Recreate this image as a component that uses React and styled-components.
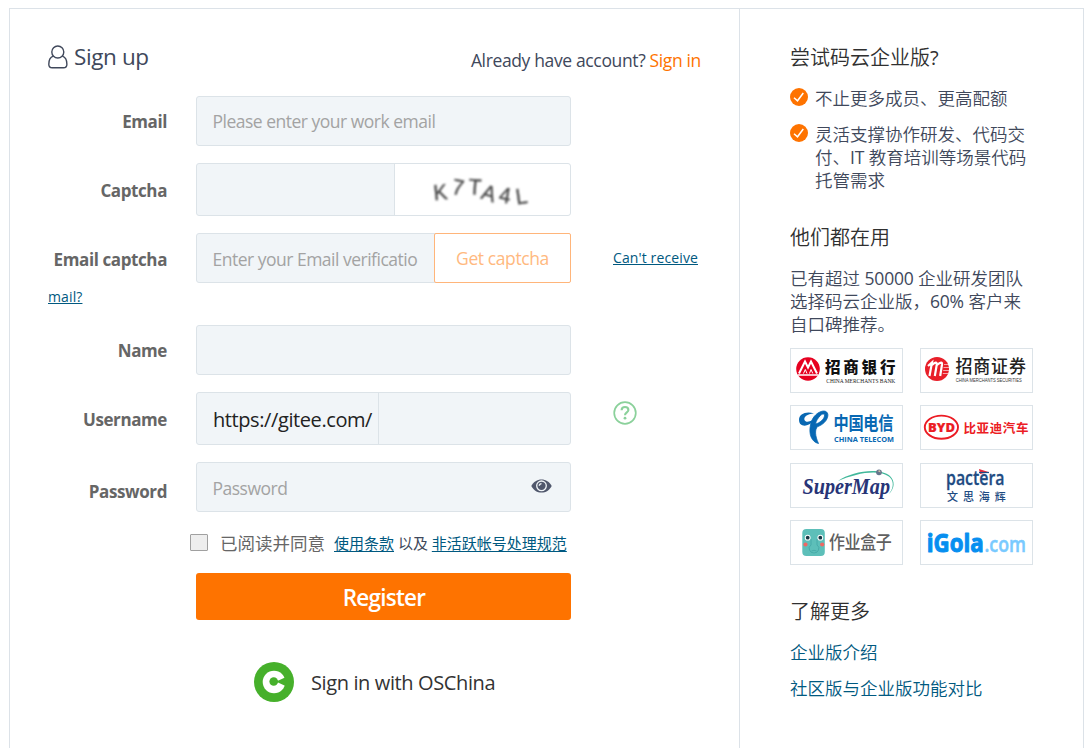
import React from "react";
import styled, { createGlobalStyle } from "styled-components";

const GlobalStyle = createGlobalStyle`
  * { box-sizing: border-box; }
  html, body { margin: 0; background: #fff; }
  body {
    overflow: hidden;
    font-family: "Open Sans", "Noto Sans CJK SC", sans-serif;
    font-size: 17.5px;
    font-weight: 400;
    color: #40485b;
  }
  a { color: #005980; text-decoration: none; }
`;

const Page = styled.main`
  display: grid;
  grid-template-columns: 730px 1fr;
  width: 1075px;
  height: 740px;
  margin: 8px 0 0 9px;
  border: 1px solid #dce2e8;
  border-bottom: 0;
`;

const FormPanel = styled.section`
  padding: 31px 38px 0 38px;
  border-right: 1px solid #dce2e8;
`;

const Header = styled.header`
  display: flex;
  justify-content: space-between;
  height: 56px;
`;

const Title = styled.h1`
  display: flex;
  align-items: center;
  gap: 6px;
  height: 32px;
  margin: 0;
  font-size: 22.5px;
  font-weight: 400;
  letter-spacing: -0.4px;
  svg { margin-top: 2px; }
`;

const SignIn = styled.p`
  margin: 0;
  line-height: 40px;
  letter-spacing: -0.36px;
  white-space: nowrap;
  a { color: #fe7300; }
`;

const Row = styled.div`
  display: grid;
  grid-template-columns: 119px 375px auto;
  grid-template-rows: 100%;
  column-gap: 29px;
  height: ${(p) => p.$height || 50}px;
  margin-bottom: ${(p) => (p.$gap === undefined ? 17 : p.$gap)}px;
`;

const Label = styled.label`
  padding-top: ${(p) => p.$drop || 0}px;
  line-height: 52px;
  text-align: right;
  font-weight: 700;
  font-size: 17px;
  letter-spacing: -0.4px;
  color: #666;
  white-space: nowrap;
`;

const Control = styled.div`
  display: flex;
  align-items: stretch;
  min-width: 0;
  background: #f1f5f8;
  border: 1px solid #dce3e8;
  border-radius: 3px;
`;

const Input = styled.input`
  flex: 1;
  min-width: 0;
  padding: ${(p) => (p.$drop ? 1 : 0)}px 0 0 15.5px;
  border: 0;
  outline: 0;
  background: transparent;
  font: inherit;
  letter-spacing: -0.5px;
  color: #222;
  &::placeholder { color: #a3a3a3; opacity: 1; }
`;

const CaptchaImage = styled.div`
  width: 176px;
  background: #fff;
  border-left: 1px solid #dce3e8;
  border-radius: 0 3px 3px 0;
  svg { display: block; }
`;

const CaptchaButton = styled.button`
  width: 137px;
  margin: -1px -1px -1px 0;
  padding: 0;
  border: 1px solid #ffb57a;
  border-radius: 2px;
  background: #fff;
  color: #ffb980;
  font: inherit;
  letter-spacing: -0.4px;
`;

const Prefix = styled.span`
  width: 182px;
  padding-left: 16px;
  border-right: 1px solid #dce3e8;
  font-size: 20px;
  line-height: 54px;
  letter-spacing: -0.41px;
  color: #222;
  white-space: nowrap;
`;

const Aside = styled.div`
  display: flex;
  padding: ${(p) => p.$top || 0}px 0 0 13px;
  white-space: nowrap;
`;

const SmallLink = styled.a`
  display: inline-block;
  font-size: 14px;
  line-height: 20px;
  letter-spacing: 0.12px;
  text-decoration: underline;
`;

const WrappedHelp = styled.div`
  display: flex;
  height: 42px;
  padding-top: 4px;
`;

const EyeToggle = styled.span`
  display: flex;
  align-items: center;
  padding: 0 18px 2px 0;
`;

const Agreement = styled.div`
  display: flex;
  align-items: center;
  height: 61px;
  margin-left: 142px;
  color: #666;
  white-space: nowrap;
`;

const CheckBox = styled.span`
  width: 18px;
  height: 17px;
  margin: 0 12px 0 0;
  background: #eee;
  border: 1px solid #a0a0a0;
  border-radius: 1px;
`;

const Terms = styled.span`
  margin-left: 9px;
  font-size: 15px;
  color: #40485b;
  a { text-decoration: underline; text-underline-offset: 2px; }
`;

const RegisterButton = styled.button`
  display: block;
  width: 375px;
  height: 47px;
  margin-left: 148px;
  padding: 1px 0 0 1px;
  border: 0;
  border-radius: 3px;
  background: #fe7300;
  color: #fff;
  font: inherit;
  font-size: 22.5px;
  font-weight: 600;
  letter-spacing: -0.75px;
`;

const OtherLogin = styled.a`
  display: flex;
  align-items: center;
  gap: 17px;
  margin: 42px 0 0 206px;
  font-size: 20px;
  && { color: #333; }
  letter-spacing: -0.38px;
`;

const SidePanel = styled.aside`
  padding: 37px 50px 0 50px;
`;

const SideHeading = styled.h2`
  height: 24px;
  margin: ${(p) => p.$top || 0}px 0 17px;
  font-size: 20px;
  font-weight: 360;
  line-height: 24px;
  color: #303030;
`;

const FeatureList = styled.ul`
  margin: 0;
  padding: 0;
  list-style: none;
`;

const Feature = styled.li`
  display: flex;
  gap: 7px;
  width: 250px;
  margin-bottom: 13px;
  line-height: 23px;
  font-weight: 360;
  svg { flex: none; margin-top: 1px; }
  span { white-space: nowrap; }
`;

const Paragraph = styled.p`
  margin: 0 0 12px;
  line-height: 23px;
  font-weight: 360;
  white-space: nowrap;
`;

const LogoGrid = styled.div`
  display: grid;
  grid-template-columns: 113px 113px;
  grid-auto-rows: 45px;
  gap: 12.33px 17px;
`;

const LogoCard = styled.div`
  border: 1px solid #dce3e8;
  svg { display: block; overflow: visible; }
`;

const MoreLink = styled.a`
  display: block;
  margin-bottom: 13px;
  line-height: 23px;
  font-weight: 360;
`;

const Latin = styled.span`
  font-weight: 400;
  letter-spacing: -0.2px;
`;

const CJK = "Noto Sans CJK SC, sans-serif";
const SERIF = "Liberation Serif, serif";

const UserIcon = () => (
  <svg width="20" height="24" viewBox="0 0 20 24" fill="none" stroke="#40485b" strokeWidth="1.4">
    <circle cx="9.8" cy="7" r="6" />
    <path d="M5.200 11.200C2 12.400.8 15.800.8 19.200Q.8 22.700 4.200 22.700H15.500Q18.900 22.700 18.900 19.200C18.900 15.800 17.600 12.400 14.400 11.200" />
  </svg>
);

const EyeIcon = () => (
  <svg width="21" height="14" viewBox="0 0 21 14">
    <path d="M.3 7C2.500 2.700 6.200.4 10.500.4S18.500 2.700 20.700 7C18.500 11.300 14.800 13.600 10.500 13.600S2.500 11.300.3 7Z" fill="#50576c" />
    <circle cx="10.500" cy="6.800" r="4.800" fill="none" stroke="#f1f5f8" strokeWidth="1.300" />
    <path d="M8.300 6.800A2.200 2.200 0 0 1 10.500 4.600" fill="none" stroke="#f1f5f8" strokeWidth="1.400" />
  </svg>
);

const HelpIcon = () => (
  <svg width="24" height="24" viewBox="0 0 24 24" fill="none" stroke="#8bd19b">
    <circle cx="12" cy="12" r="10.800" strokeWidth="1.700" />
    <path d="M8.600 9.200C8.700 7.100 10.100 6 12 6C14 6 15.400 7.200 15.400 9C15.400 11.300 12 11.500 12 14.300" strokeWidth="2.100" />
    <circle cx="12" cy="17.200" r="1.400" fill="#8bd19b" stroke="none" />
  </svg>
);

const CheckIcon = () => (
  <svg width="18" height="18" viewBox="0 0 18 18">
    <circle cx="9" cy="9" r="9" fill="#fe7300" />
    <path d="M4 9.700L7.500 12.800L13.300 5" fill="none" stroke="#fff" strokeWidth="1.500" />
  </svg>
);

const OSChinaIcon = () => (
  <svg width="40" height="40" viewBox="0 0 40 40">
    <circle cx="20" cy="20" r="20" fill="#46b02b" />
    <circle cx="20" cy="20" r="11.300" fill="#fff" />
    <circle cx="19.700" cy="19.500" r="4.300" fill="#46b02b" />
    <path d="M20 18.200L24.500 18.600L31 15.500L33 20L31 23.800L24 20.600L20 21.500Z" fill="#46b02b" />
  </svg>
);

const captchaGlyphs = [
  ["K", 45.5, 28, -6], ["7", 63, 23, 10], ["T", 80, 22.5, 4],
  ["A", 94, 29, 18], ["4", 110, 31, 10], ["L", 126.5, 32, -8],
];

const CaptchaPicture = () => (
  <svg width="175" height="51" viewBox="0 0 175 51">
    <g fill="#444" stroke="#444" strokeWidth=".3" fontFamily="Liberation Sans, sans-serif" fontSize="21" textAnchor="middle" style={{ filter: "blur(0.8px)" }}>
      {captchaGlyphs.map(([ch, x, y, turn]) => (
        <text key={ch} transform={`translate(${x} ${y}) rotate(${turn}) scale(1 1.05)`} y="7.500">{ch}</text>
      ))}
    </g>
  </svg>
);

const Logo = ({ children }) => (
  <LogoCard>
    <svg width="111" height="43" viewBox="1 1 111 43">{children}</svg>
  </LogoCard>
);

const Word = ({ x, y, size, w, fill, family = "Open Sans, sans-serif", weight = 700, children, ...rest }) => (
  <text x={x} y={y} fontSize={size} textLength={w} lengthAdjust="spacingAndGlyphs" fill={fill} fontFamily={family} fontWeight={weight} {...rest}>
    {children}
  </text>
);

const Glyphs = ({ x, y, size, pitch, fill, weight = 700, text, rise = 1 }) => (
  <g fill={fill} fontFamily={CJK} fontWeight={weight} fontSize={size} transform={`translate(${x} ${y}) scale(1 ${rise})`}>
    <text x={[...text].map((_, i) => i * pitch).join(" ")}>{text}</text>
  </g>
);

const Logos = () => (
  <LogoGrid>
    <Logo>
      <circle cx="18" cy="21" r="11.800" fill="#e60020" />
      <path d="M9 25.500L15 13.500L18 19.500L21 13.500L27 25.500" fill="none" stroke="#fff" strokeWidth="2" />
      <path d="M13.500 25.500L15.300 21.500L17 25.500M19.500 25.500L21 21.500L22.800 25.500" fill="none" stroke="#fff" strokeWidth="1" />
      <path d="M7.500 27H28.500" stroke="#fff" strokeWidth="1.500" />
      <Glyphs x={35} y={24.500} size={15.500} pitch={18.300} fill="#111" weight={900} text="招商银行" />
      <Word x={36.300} y={35.300} size={6.200} w={69} fill="#222" family={SERIF} weight={400}>CHINA MERCHANTS BANK</Word>
    </Logo>
    <Logo>
      <circle cx="17" cy="21" r="12" fill="#e81f29" />
      <path d="M8 18L12 14.500L9.500 28M12 17Q17 12.500 16.800 16.500L14.800 28M17 17Q22.500 12.500 22 16.500L20.200 28" fill="none" stroke="#fff" strokeWidth="2.200" />
      <path d="M24 16.500H29M23.500 19.500H29M23.200 22.500H29M22.800 25.500H28" stroke="#fff" strokeWidth=".6" />
      <Glyphs x={35.500} y={25} size={17} pitch={17.800} fill="#222" weight={500} text="招商证券" rise={1.050} />
      <Word x={35.700} y={34} size={5.200} w={66} fill="#333" weight={400} family="Liberation Sans, sans-serif">CHINA MERCHANTS SECURITIES</Word>
    </Logo>
    <Logo>
      <path d="M9 15C9 9 16 6 24 8.500C17 9 13.500 12 14.500 15C16 18.500 22 16.500 29 11C23.500 17.500 17 21.500 13 20.500C10.500 20 9 18 9 15Z" fill="#0868b3" />
      <path d="M20.500 20C22 11 29 6 34 6C38.500 6.500 39 11 36 15.500C33.500 19 30 20.800 27.800 21.500C24.500 24 25 31 28.500 38.500C21.500 37 18.500 29 20.500 20ZM25.500 19C30 18 34 14 34.500 11C35 8.500 32.500 8.500 30.500 10.500C28 12.800 26 16 25.500 19Z" fill="#0868b3" stroke="#0868b3" strokeWidth=".8" fillRule="evenodd" />
      <Glyphs x={43.500} y={25.300} size={15.200} pitch={14.900} fill="#0868b3" text="中国电信" rise={1.200} />
      <Word x={44} y={36.500} size={6.800} w={60} fill="#0868b3">CHINA TELECOM</Word>
    </Logo>
    <Logo>
      <ellipse cx="21.400" cy="22.200" rx="16.600" ry="11.600" fill="none" stroke="#ec1c24" strokeWidth="1.900" />
      <Word x={8} y={27} size={12.800} w={27} fill="#ec1c24" weight={800} stroke="#ec1c24" strokeWidth=".2">BYD</Word>
      <Glyphs x={43.500} y={28} size={12.500} pitch={13.100} fill="#ec1c24" weight={700} text="比亚迪汽车" />
    </Logo>
    <Logo>
      <path d="M48 18C62 8 90 4 100 13C105 18 105 25 99 31C106 22 102 15 98 13C88 6 66 10 48 18Z" fill="#42b89b" />
      <circle cx="89" cy="9.300" r="2.900" fill="#65758c" />
      <path d="M87.500 8L90 7.200L90.500 9.500Z" fill="#d5c7a6" />
      <Word x={12.500} y={30.500} size={23.500} w={87.500} fill="#283477" family={SERIF} fontStyle="italic">SuperMap</Word>
    </Logo>
    <Logo>
      <Word x={26} y={21.800} size={19} w={58.500} fill="#1e4b82" weight={600} stroke="#1e4b82" strokeWidth=".3">pactera</Word>
      <path d="M59 6L68.500 9L60 11Z" fill="#e52b3b" />
      <path d="M59 9.500H69" stroke="#1e4b82" strokeWidth="1.200" />
      <Glyphs x={27} y={37.500} size={11} pitch={15.900} fill="#1e4b82" weight={500} text="文思海辉" />
    </Logo>
    <Logo>
      <rect x="12.300" y="9" width="22.500" height="27" rx="4" fill="#5dbfb9" />
      <circle cx="17.700" cy="17.700" r="2.900" fill="#fff" /><circle cx="30.300" cy="17.700" r="2.900" fill="#fff" />
      <circle cx="17.700" cy="17.700" r="1.900" fill="#173845" /><circle cx="30.300" cy="17.700" r="1.900" fill="#173845" />
      <circle cx="15.500" cy="24.500" r="2.100" fill="#ef6864" /><circle cx="32.200" cy="24.500" r="2.100" fill="#ef6864" />
      <path d="M21 19V25Q18 27 19.500 30Q20.500 33 24 33T28.500 30Q30 27 27 25V19M21.500 31Q24 29.500 26.500 31" fill="none" stroke="#43a6a5" strokeWidth=".8" />
      <Glyphs x={39} y={28.800} size={16} pitch={15.600} fill="#606060" weight={500} text="作业盒子" rise={1.120} />
    </Logo>
    <Logo>
      <Word x={6.800} y={31.500} size={25.500} w={57} fill="#078ff0" weight={700} stroke="#078ff0" strokeWidth="1" strokeLinejoin="round">iGola</Word>
      <Word x={64.500} y={31.500} size={22} w={41.500} fill="#79caff" weight={600} stroke="#79caff" strokeWidth=".5">.com</Word>
    </Logo>
  </LogoGrid>
);

export default function App() {
  return (
    <>
      <GlobalStyle />
      <Page>
        <FormPanel>
          <Header>
            <Title><UserIcon />Sign up</Title>
            <SignIn>Already have account? <a href="#signin">Sign in</a></SignIn>
          </Header>
          <Row>
            <Label>Email</Label>
            <Control><Input placeholder="Please enter your work email" /></Control>
          </Row>
          <Row $height={53}>
            <Label $drop={2}>Captcha</Label>
            <Control><Input /><CaptchaImage><CaptchaPicture /></CaptchaImage></Control>
          </Row>
          <Row $gap={0}>
            <Label $drop={1}>Email captcha</Label>
            <Control>
              <Input $drop placeholder="Enter your Email verificatio" />
              <CaptchaButton>Get captcha</CaptchaButton>
            </Control>
            <Aside $top={15}><SmallLink href="#help">Can't receive</SmallLink></Aside>
          </Row>
          <WrappedHelp><SmallLink href="#help">mail?</SmallLink></WrappedHelp>
          <Row>
            <Label>Name</Label>
            <Control><Input /></Control>
          </Row>
          <Row $height={53}>
            <Label $drop={2}>Username</Label>
            <Control><Prefix>https://gitee.com/</Prefix><Input /></Control>
            <Aside $top={9}><HelpIcon /></Aside>
          </Row>
          <Row $gap={0}>
            <Label $drop={4}>Password</Label>
            <Control><Input $drop placeholder="Password" /><EyeToggle><EyeIcon /></EyeToggle></Control>
          </Row>
          <Agreement>
            <CheckBox />
            已阅读并同意
            <Terms><a href="#terms">使用条款</a> 以及 <a href="#inactive">非活跃帐号处理规范</a></Terms>
          </Agreement>
          <RegisterButton>Register</RegisterButton>
          <OtherLogin href="#oschina"><OSChinaIcon />Sign in with OSChina</OtherLogin>
        </FormPanel>
        <SidePanel>
          <SideHeading>尝试码云企业版<Latin>?</Latin></SideHeading>
          <FeatureList>
            <Feature><CheckIcon /><span>不止更多成员、更高配额</span></Feature>
            <Feature><CheckIcon /><span>灵活支撑协作研发、代码交<br />付、<Latin>IT</Latin> 教育培训等场景代码<br />托管需求</span></Feature>
          </FeatureList>
          <SideHeading $top={34}>他们都在用</SideHeading>
          <Paragraph>已有超过 <Latin>50000</Latin> 企业研发团队<br />选择码云企业版，<Latin>60%</Latin> 客户来<br />自口碑推荐。</Paragraph>
          <Logos />
          <SideHeading $top={35}>了解更多</SideHeading>
          <MoreLink href="#intro">企业版介绍</MoreLink>
          <MoreLink href="#compare">社区版与企业版功能对比</MoreLink>
        </SidePanel>
      </Page>
    </>
  );
}
